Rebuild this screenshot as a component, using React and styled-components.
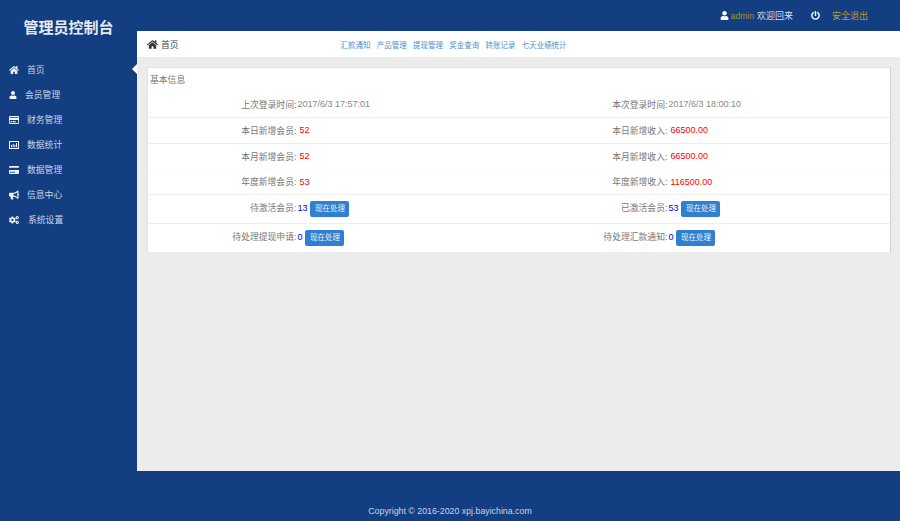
import React from "react";
import styled, { createGlobalStyle } from "styled-components";
import { FaHome, FaUser, FaRegCreditCard, FaCreditCard, FaBullhorn, FaCogs, FaPowerOff } from "react-icons/fa";

const Global = createGlobalStyle`
  html, body { margin: 0; padding: 0; background: #133f82; }
  body { font-family: "Liberation Sans", "Noto Sans CJK SC", sans-serif; font-size: 8.8px; color: #666; }
  * { box-sizing: border-box; }
`;

const Page = styled.div`
  width: 900px; height: 521px; overflow: hidden;
  display: grid; grid-template-columns: 137px 1fr; grid-template-rows: 471px 50px;
  background: #133f82;
`;
const Sidebar = styled.aside`
  display: flex; flex-direction: column; color: #fff;
`;
const Logo = styled.h1`
  margin: 0; height: 57px; padding-top: 18px; text-align: center;
  font-size: 15px; line-height: 18px; font-weight: 700; color: #e6ebf3;
  font-family: "Noto Sans CJK SC", sans-serif;
`;
const Menu = styled.nav`display: flex; flex-direction: column;`;
const MenuItem = styled.a`
  position: relative; display: flex; align-items: center;
  height: 25px; padding-left: 9px;
  font-size: 8.8px; color: #cbd5e6;
`;
const MenuGlyph = styled.span`
  flex: none; display: flex; align-items: center; justify-content: flex-start;
  width: ${p => p.$w}px; color: #f0f3f8; font-size: 10px;
  svg { display: block; }
`;
const Notch = styled.span`
  position: absolute; right: 0; top: 7px; width: 0; height: 0;
  border: 5px solid transparent; border-left-width: 0; border-right: 5px solid #fff;
`;

const Main = styled.main`display: flex; flex-direction: column; min-width: 0;`;
const TopBar = styled.header`
  height: 31px; flex: none; display: flex; align-items: center; justify-content: flex-end;
  padding: 0 32px 0 0; color: #d5deeb; font-size: 9px;
`;
const TopGlyph = styled.span`
  display: flex; color: #fff; font-size: 9px; margin-right: ${p => p.$mr ?? 0}px;
`;
const Gold = styled.span`color: #a8922f; font-size: 8.5px;`;
const Welcome = styled.span`margin-left: 3px; margin-right: 18px;`;
const Logout = styled.a`color: #bd9c1f; margin-left: 12px;`;

const Content = styled.div`flex: 1; background: #ececec; display: flex; flex-direction: column;`;
const Crumbs = styled.div`
  height: 26px; flex: none; background: #fff; display: flex; align-items: center; padding-left: 10px;
  color: #444;
`;
const CrumbGlyph = styled.span`display: flex; font-size: 11px; color: #333; margin-right: 3px;`;
const QuickNav = styled.nav`
  display: flex; gap: 6.5px; margin-left: 162px; font-size: 7.45px; color: #4b8fca;
`;
const Card = styled.section`
  margin: 10px 9px 0 10px; background: #fff;
  border: 1px solid #e2e2e2; border-width: 1px 1px 0 1px; border-right-color: #cfcfcf;
`;
const CardTitle = styled.div`height: 24px; padding-left: 2px; line-height: 24px; color: #777;`;
const Table = styled.table`
  width: 100%; border-collapse: collapse; table-layout: fixed;
`;
const Row = styled.tr`
  height: ${p => p.$h}px;
  border-bottom: 1px solid ${p => p.$faint ? "#f8f8f8" : "#eee"};
`;
const Label = styled.th`
  width: 20%; padding: 0 0 ${p => p.$lift ? 3 : 0}px; font-weight: 400; text-align: right; color: #777;
`;
const Value = styled.td`
  width: 30%; padding: 0 0 0 ${p => p.$pl ?? 1}px; font-size: 9px;
  color: ${p => p.$c || "#888"};
`;
const Act = styled.a`
  display: inline-block; width: 39px; height: 16px; line-height: 16px; margin-left: 3px;
  border-radius: 2px; background: #2f80d0; color: #e8f1fa; font-size: 7.5px; text-align: center; vertical-align: middle;
`;
const Footer = styled.footer`
  grid-column: 1 / 3; display: flex; align-items: flex-end; justify-content: center;
  padding-bottom: 4px; color: #c9d3e4; font-size: 8.8px; line-height: 12px;
`;

const Stats = () => (
  <svg width="10" height="10" viewBox="0 0 10 10" fill="currentColor">
    <path fillRule="evenodd" d="M0 1h10v8H0zM1 2v6h8V2zM2 5h1v2.2H2zM3.7 4h1v3.2h-1zM5.4 4.8h1v2.4h-1zM7 3h1v4.2H7z" />
  </svg>
);

const items = [
  ["首页", <FaHome />, 18],
  ["会员管理", <FaUser size={8} />, 16],
  ["财务管理", <FaRegCreditCard />, 18],
  ["数据统计", <Stats />, 18],
  ["数据管理", <FaCreditCard />, 18],
  ["信息中心", <FaBullhorn />, 18],
  ["系统设置", <FaCogs />, 19],
];

function Btn() { return <Act>现在处理</Act>; }

export default function App() {
  return (
    <>
      <Global />
      <Page>
        <Sidebar>
          <Logo>管理员控制台</Logo>
          <Menu>
            {items.map(([t, icon, w], i) => (
              <MenuItem key={t}>
                <MenuGlyph $w={w}>{icon}</MenuGlyph>
                {t}
                {i === 0 && <Notch />}
              </MenuItem>
            ))}
          </Menu>
        </Sidebar>
        <Main>
          <TopBar>
            <TopGlyph $mr={2}><FaUser /></TopGlyph>
            <Gold>admin</Gold>
            <Welcome>欢迎回来</Welcome>
            <TopGlyph><FaPowerOff /></TopGlyph>
            <Logout>安全退出</Logout>
          </TopBar>
          <Content>
            <Crumbs>
              <CrumbGlyph><FaHome /></CrumbGlyph>
              首页
              <QuickNav>
                <a>汇款通知</a><a>产品管理</a><a>提现管理</a><a>奖金查询</a><a>转账记录</a><a>七天业绩统计</a>
              </QuickNav>
            </Crumbs>
            <Card>
              <CardTitle>基本信息</CardTitle>
              <Table>
                <tbody>
                  <Row $h={25}><Label>上次登录时间:</Label><Value>2017/6/3 17:57:01</Value><Label>本次登录时间:</Label><Value>2017/6/3 18:00:10</Value></Row>
                  <Row $h={26}><Label>本日新增会员:</Label><Value $c="#f00" $pl={3}>52</Value><Label>本日新增收入:</Label><Value $c="#f00" $pl={3}>66500.00</Value></Row>
                  <Row $h={26} $faint><Label>本月新增会员:</Label><Value $c="#f00" $pl={3}>52</Value><Label>本月新增收入:</Label><Value $c="#f00" $pl={3}>66500.00</Value></Row>
                  <Row $h={25}><Label>年度新增会员:</Label><Value $c="#f00" $pl={3}>53</Value><Label>年度新增收入:</Label><Value $c="#f00" $pl={3}>116500.00</Value></Row>
                  <Row $h={29}><Label $lift>待激活会员:</Label><Value $c="#00f">13<Btn /></Value><Label $lift>已激活会员:</Label><Value $c="#00f">53<Btn /></Value></Row>
                  <Row $h={29}><Label $lift>待处理提现申请:</Label><Value $c="#00f">0<Btn /></Value><Label $lift>待处理汇款通知:</Label><Value $c="#00f">0<Btn /></Value></Row>
                </tbody>
              </Table>
            </Card>
          </Content>
        </Main>
        <Footer>Copyright © 2016-2020 xpj.bayichina.com</Footer>
      </Page>
    </>
  );
}
